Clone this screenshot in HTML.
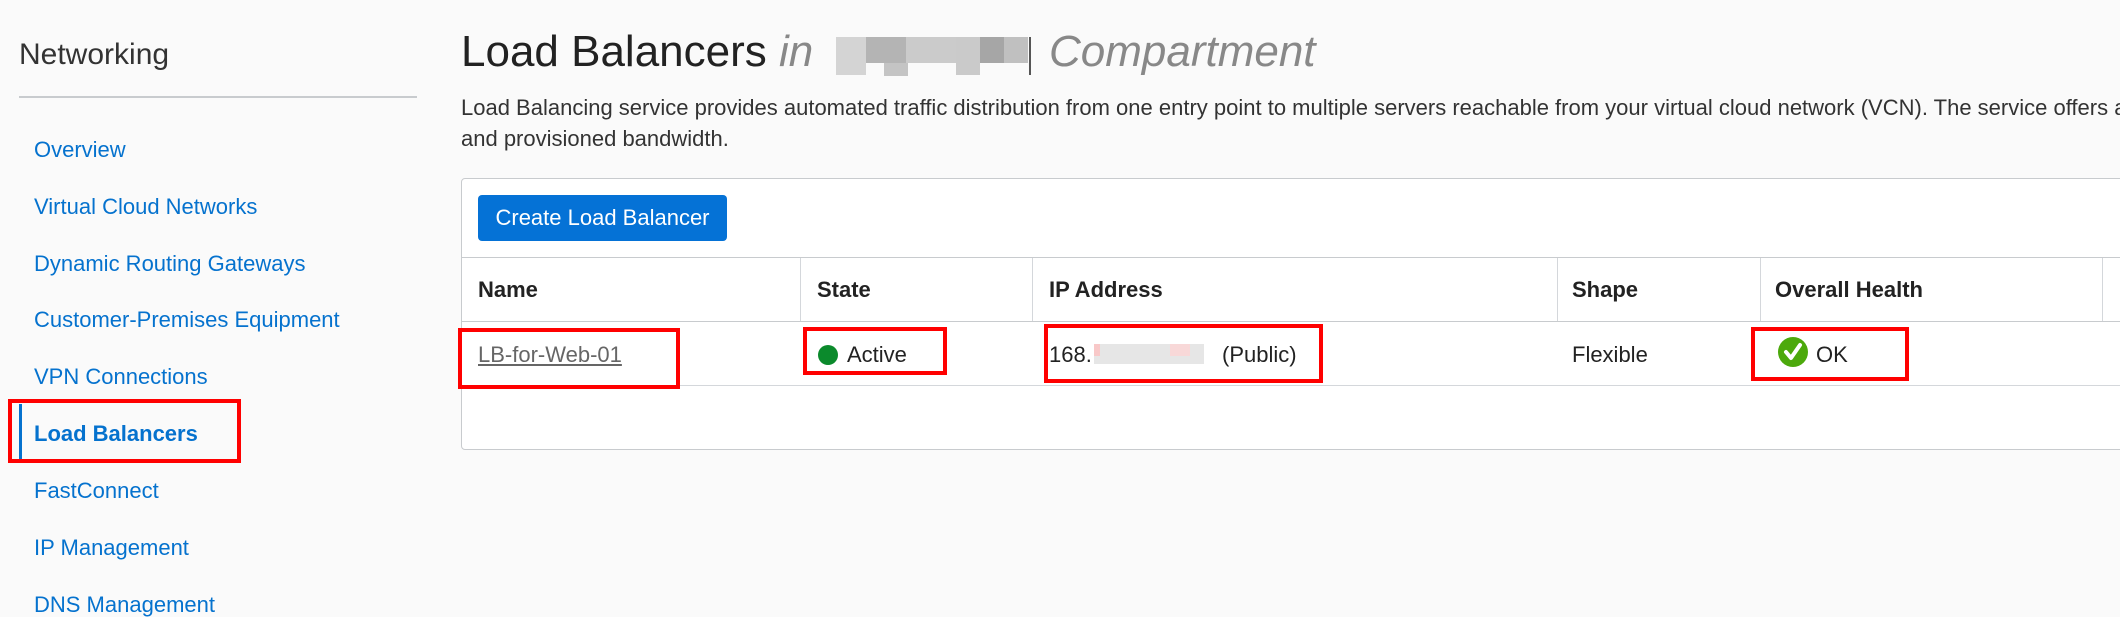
<!DOCTYPE html>
<html><head><meta charset="utf-8"><style>
*{margin:0;padding:0;box-sizing:border-box}
body{width:2120px;height:598px;overflow:hidden;background:#fafafa;font-family:"Liberation Sans",Arial,sans-serif;position:relative;color:#333}
.a{position:absolute;white-space:nowrap}
.nav{position:absolute;left:34px;font-size:22px;color:#0572ce;line-height:24px}
.red{position:absolute;border:4px solid #f00}
.th{position:absolute;top:277px;font-size:22px;font-weight:bold;color:#222}
.sep{position:absolute;top:258px;width:1px;height:63px;background:#d4d7db}
.td{position:absolute;top:342px;font-size:22px;color:#222}
</style></head><body>
<div class="a" style="left:19px;top:38px;font-size:30px;color:#333">Networking</div>
<div class="a" style="left:19px;top:96px;width:398px;height:2px;background:#c8cbce"></div>
<div class="nav" style="top:138px">Overview</div>
<div class="nav" style="top:195px">Virtual Cloud Networks</div>
<div class="nav" style="top:252px">Dynamic Routing Gateways</div>
<div class="nav" style="top:308px">Customer-Premises Equipment</div>
<div class="nav" style="top:365px">VPN Connections</div>
<div class="nav" style="top:422px;font-weight:bold">Load Balancers</div>
<div class="nav" style="top:479px">FastConnect</div>
<div class="nav" style="top:536px">IP Management</div>
<div class="nav" style="top:593px">DNS Management</div>
<div class="a" style="left:19px;top:404px;width:3px;height:55px;background:#0572ce"></div>
<div class="red" style="left:8px;top:399px;width:233px;height:64px"></div>

<div class="a" style="left:461px;top:27px;font-size:44px;color:#222">Load Balancers <span style="font-style:italic;color:#888">in</span></div>
<div class="a" style="left:836px;top:37px;width:30px;height:38px;background:#d4d4d4"></div>
<div class="a" style="left:866px;top:37px;width:40px;height:26px;background:#b4b4b4"></div>
<div class="a" style="left:884px;top:63px;width:24px;height:13px;background:#c4c4c4"></div>
<div class="a" style="left:906px;top:37px;width:50px;height:26px;background:#cbcbcb"></div>
<div class="a" style="left:956px;top:37px;width:24px;height:38px;background:#cacaca"></div>
<div class="a" style="left:980px;top:37px;width:24px;height:26px;background:#a6a6a6"></div>
<div class="a" style="left:1004px;top:37px;width:24px;height:26px;background:#c0c0c0"></div>
<div class="a" style="left:1029px;top:37px;width:2px;height:38px;background:#555"></div>
<div class="a" style="left:1049px;top:27px;font-size:44px;font-style:italic;color:#888">Compartment</div>
<div class="a" style="left:461px;top:92px;font-size:22px;line-height:31px;color:#333">Load Balancing service provides automated traffic distribution from one entry point to multiple servers reachable from your virtual cloud network (VCN). The service offers a load balancer with your choice of a public or private IP address,<br>and provisioned bandwidth.</div>

<div class="a" style="left:461px;top:178px;width:1700px;height:272px;background:#fff;border:1px solid #c8cbce;border-radius:4px"></div>
<div class="a" style="left:478px;top:195px;width:249px;height:46px;background:#0572d6;border-radius:4px;color:#fff;font-size:22px;line-height:46px;text-align:center">Create Load Balancer</div>
<div class="a" style="left:462px;top:257px;width:1658px;height:1px;background:#c8cbce"></div>
<div class="a" style="left:462px;top:321px;width:1658px;height:1px;background:#c8cbce"></div>
<div class="a" style="left:462px;top:385px;width:1658px;height:1px;background:#d4d7db"></div>
<div class="sep" style="left:800px"></div><div class="sep" style="left:1032px"></div><div class="sep" style="left:1557px"></div><div class="sep" style="left:1760px"></div><div class="sep" style="left:2102px"></div>
<div class="th" style="left:478px">Name</div>
<div class="th" style="left:817px">State</div>
<div class="th" style="left:1049px">IP Address</div>
<div class="th" style="left:1572px">Shape</div>
<div class="th" style="left:1775px">Overall Health</div>

<div class="td" style="left:478px;color:#666;text-decoration:underline">LB-for-Web-01</div>
<div class="a" style="left:818px;top:345px;width:20px;height:20px;border-radius:50%;background:#0b8a2c"></div>
<div class="td" style="left:847px">Active</div>
<div class="td" style="left:1049px">168.</div>
<div class="a" style="left:1094px;top:344px;width:110px;height:20px;background:#e6e6e6"></div>
<div class="a" style="left:1094px;top:344px;width:6px;height:12px;background:#f8c8c8"></div>
<div class="a" style="left:1170px;top:344px;width:20px;height:12px;background:#f8d8d8"></div>
<div class="td" style="left:1222px">(Public)</div>
<div class="td" style="left:1572px">Flexible</div>
<svg class="a" style="left:1778px;top:337px" width="30" height="30" viewBox="0 0 30 30"><ellipse cx="15" cy="15" rx="15" ry="15" fill="#4ca90c"/><path d="M8 15 L13 21 L22 8" stroke="#fff" stroke-width="4" fill="none" stroke-linecap="round" stroke-linejoin="round"/></svg>
<div class="td" style="left:1816px">OK</div>

<div class="red" style="left:458px;top:328px;width:222px;height:61px"></div>
<div class="red" style="left:803px;top:327px;width:144px;height:48px"></div>
<div class="red" style="left:1044px;top:324px;width:279px;height:59px"></div>
<div class="red" style="left:1751px;top:327px;width:158px;height:54px"></div>
</body></html>
